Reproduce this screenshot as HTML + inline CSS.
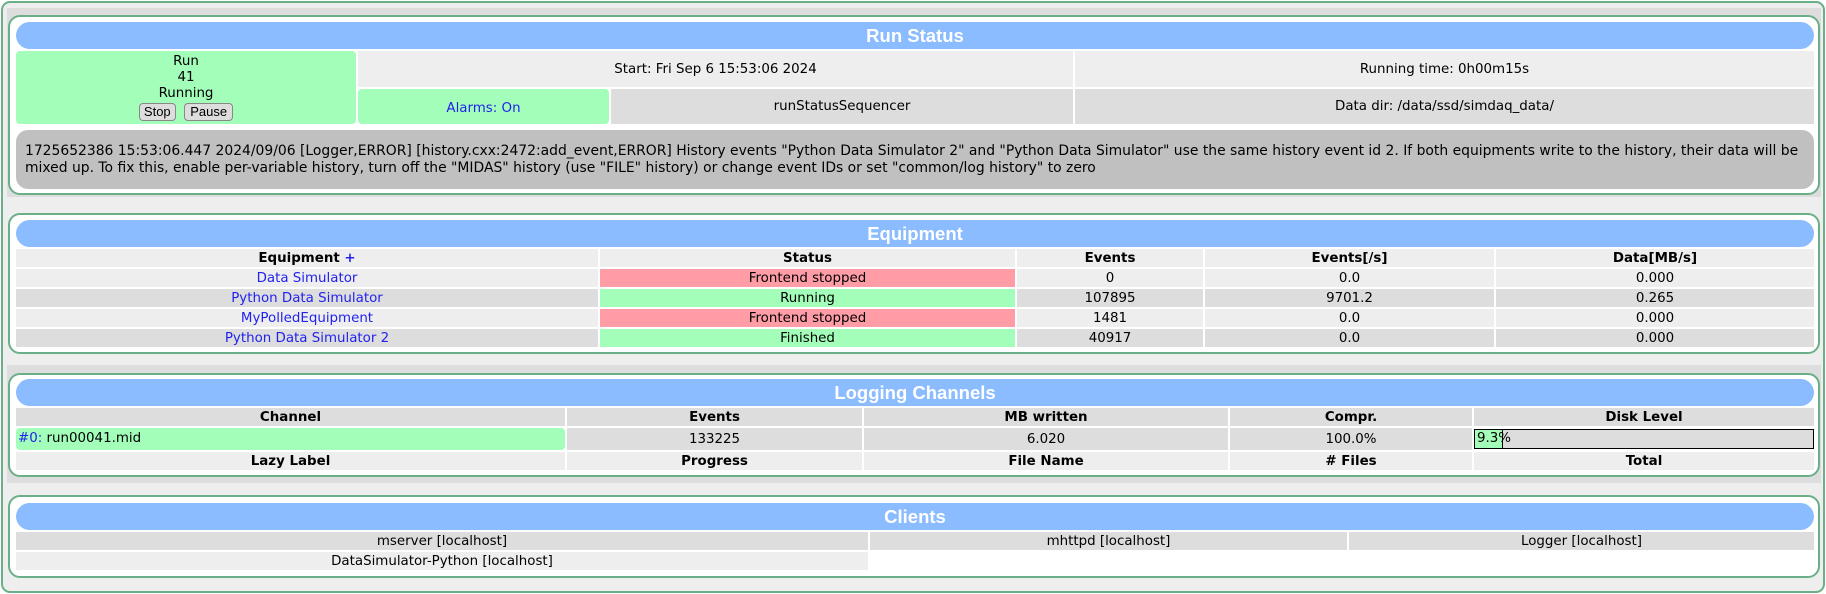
<!DOCTYPE html>
<html><head><meta charset="utf-8"><style>
body{margin:0;width:1826px;height:594px;background:#fff;position:relative;overflow:hidden;font-family:"DejaVu Sans","Liberation Sans",sans-serif;font-size:13.4px;color:#000}
div{position:absolute;box-sizing:border-box}
.c{display:flex;align-items:center;justify-content:center;text-align:center;white-space:nowrap}
.box{border:2px solid #6aaf88;border-radius:12px;background:#fff}
.hd{background:#8bbcff;border-radius:14px;color:#fff;font-weight:bold;font-size:18.5px;font-family:"Liberation Sans",sans-serif}
.l{background:#eee}.d{background:#ddd}.g{background:#a2feb8}.r{background:#ff9ca6}
.b{font-weight:bold}.a{color:#2222ee}
</style></head><body>
<div style="left:1px;top:1px;width:1824px;height:592px;border:2px solid #6aaf88;border-radius:9px;background:#eee"></div>
<div class="d" style="left:7px;top:8px;width:1814px;height:189px"></div>
<div class="l" style="left:7px;top:199px;width:1814px;height:164px"></div>
<div class="d" style="left:7px;top:365px;width:1814px;height:118px"></div>
<div class="l" style="left:7px;top:485px;width:1814px;height:100px"></div>

<!-- Run status -->
<div class="box" style="left:8px;top:15px;width:1812px;height:180px"></div>
<div class="hd c" style="left:16px;top:22px;width:1798px;height:27px">Run Status</div>
<div class="g c" style="left:16px;top:51px;width:340px;height:73px;border-radius:4px;flex-direction:column;line-height:16px"><span>Run</span><span>41</span><span>Running</span><span style="margin-top:1px"><span style="display:inline-block;border:1px solid #888;border-radius:4px;background:#ddd;padding:0 4px;font-family:'Liberation Sans',sans-serif;font-size:13px;line-height:16px">Stop</span>&nbsp;&nbsp;<span style="display:inline-block;border:1px solid #888;border-radius:4px;background:#ddd;padding:0 5px;font-family:'Liberation Sans',sans-serif;font-size:13px;line-height:16px">Pause</span></span></div>
<div class="l c" style="left:358px;top:51px;width:715px;height:36px">Start: Fri Sep 6 15:53:06 2024</div>
<div class="l c" style="left:1075px;top:51px;width:739px;height:36px">Running time: 0h00m15s</div>
<div class="g c a" style="left:358px;top:89px;width:251px;height:35px;border-radius:4px;padding-top:4px">Alarms: On</div>
<div class="d c" style="left:611px;top:89px;width:462px;height:35px">runStatusSequencer</div>
<div class="d c" style="left:1075px;top:89px;width:739px;height:35px">Data dir: /data/ssd/simdaq_data/</div>
<div style="left:16px;top:130px;width:1798px;height:59px;background:#c0c0c0;border-radius:12px;padding:13px 8px 0 9px;line-height:17px;font-size:13.9px">1725652386 15:53:06.447 2024/09/06 [Logger,ERROR] [history.cxx:2472:add_event,ERROR] History events "Python Data Simulator 2" and "Python Data Simulator" use the same history event id 2. If both equipments write to the history, their data will be mixed up. To fix this, enable per-variable history, turn off the "MIDAS" history (use "FILE" history) or change event IDs or set "common/log history" to zero</div>

<!-- Equipment -->
<div class="box" style="left:8px;top:213px;width:1812px;height:141px"></div>
<div class="hd c" style="left:16px;top:220px;width:1798px;height:27px">Equipment</div>
<div class="l c b" style="left:16px;top:249px;width:582px;height:18px">Equipment&nbsp;<span class="a">+</span></div>
<div class="l c b" style="left:600px;top:249px;width:415px;height:18px">Status</div>
<div class="l c b" style="left:1017px;top:249px;width:186px;height:18px">Events</div>
<div class="l c b" style="left:1205px;top:249px;width:289px;height:18px">Events[/s]</div>
<div class="l c b" style="left:1496px;top:249px;width:318px;height:18px">Data[MB/s]</div>

<div class="l c a" style="left:16px;top:269px;width:582px;height:18px">Data Simulator</div>
<div class="r c" style="left:600px;top:269px;width:415px;height:18px">Frontend stopped</div>
<div class="l c" style="left:1017px;top:269px;width:186px;height:18px">0</div>
<div class="l c" style="left:1205px;top:269px;width:289px;height:18px">0.0</div>
<div class="l c" style="left:1496px;top:269px;width:318px;height:18px">0.000</div>

<div class="d c a" style="left:16px;top:289px;width:582px;height:18px">Python Data Simulator</div>
<div class="g c" style="left:600px;top:289px;width:415px;height:18px">Running</div>
<div class="d c" style="left:1017px;top:289px;width:186px;height:18px">107895</div>
<div class="d c" style="left:1205px;top:289px;width:289px;height:18px">9701.2</div>
<div class="d c" style="left:1496px;top:289px;width:318px;height:18px">0.265</div>

<div class="l c a" style="left:16px;top:309px;width:582px;height:18px">MyPolledEquipment</div>
<div class="r c" style="left:600px;top:309px;width:415px;height:18px">Frontend stopped</div>
<div class="l c" style="left:1017px;top:309px;width:186px;height:18px">1481</div>
<div class="l c" style="left:1205px;top:309px;width:289px;height:18px">0.0</div>
<div class="l c" style="left:1496px;top:309px;width:318px;height:18px">0.000</div>

<div class="d c a" style="left:16px;top:329px;width:582px;height:18px">Python Data Simulator 2</div>
<div class="g c" style="left:600px;top:329px;width:415px;height:18px">Finished</div>
<div class="d c" style="left:1017px;top:329px;width:186px;height:18px">40917</div>
<div class="d c" style="left:1205px;top:329px;width:289px;height:18px">0.0</div>
<div class="d c" style="left:1496px;top:329px;width:318px;height:18px">0.000</div>

<!-- Logging -->
<div class="box" style="left:8px;top:373px;width:1812px;height:104px"></div>
<div class="hd c" style="left:16px;top:379px;width:1798px;height:27px">Logging Channels</div>
<div class="d c b" style="left:16px;top:408px;width:549px;height:18px">Channel</div>
<div class="d c b" style="left:567px;top:408px;width:295px;height:18px">Events</div>
<div class="d c b" style="left:864px;top:408px;width:364px;height:18px">MB written</div>
<div class="d c b" style="left:1230px;top:408px;width:242px;height:18px">Compr.</div>
<div class="d c b" style="left:1474px;top:408px;width:340px;height:18px">Disk Level</div>
<div class="g" style="left:16px;top:428px;width:549px;height:22px;border-radius:4px;padding:3px 0 0 2px;white-space:nowrap"><span class="a">#0:</span> run00041.mid</div>
<div class="d c" style="left:567px;top:428px;width:295px;height:22px">133225</div>
<div class="d c" style="left:864px;top:428px;width:364px;height:22px">6.020</div>
<div class="d c" style="left:1230px;top:428px;width:242px;height:22px">100.0%</div>
<div style="left:1474px;top:429px;width:340px;height:20px;border:1px solid #000;background:#ddd"></div>
<div style="left:1475px;top:430px;width:28px;height:18px;background:#a2feb8;border-right:1px solid #000"></div>
<div style="left:1477px;top:431px;white-space:nowrap">9.3%</div>
<div class="l c b" style="left:16px;top:452px;width:549px;height:18px">Lazy Label</div>
<div class="l c b" style="left:567px;top:452px;width:295px;height:18px">Progress</div>
<div class="l c b" style="left:864px;top:452px;width:364px;height:18px">File Name</div>
<div class="l c b" style="left:1230px;top:452px;width:242px;height:18px"># Files</div>
<div class="l c b" style="left:1474px;top:452px;width:340px;height:18px">Total</div>

<!-- Clients -->
<div class="box" style="left:8px;top:495px;width:1812px;height:83px"></div>
<div class="hd c" style="left:16px;top:503px;width:1798px;height:27px">Clients</div>
<div class="d c" style="left:16px;top:532px;width:852px;height:18px">mserver [localhost]</div>
<div class="d c" style="left:870px;top:532px;width:477px;height:18px">mhttpd [localhost]</div>
<div class="d c" style="left:1349px;top:532px;width:465px;height:18px">Logger [localhost]</div>
<div class="l c" style="left:16px;top:552px;width:852px;height:18px">DataSimulator-Python [localhost]</div>
</body></html>
